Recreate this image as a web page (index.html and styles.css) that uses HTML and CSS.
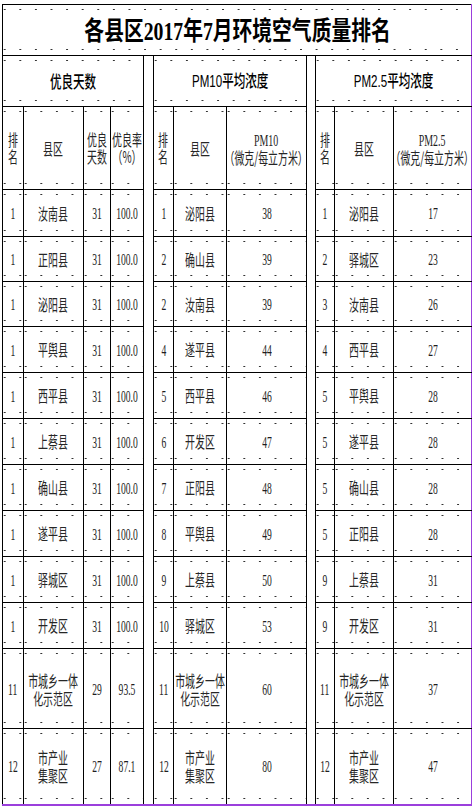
FILE: index.html
```html
<!DOCTYPE html>
<html lang="zh-CN">
<head>
<meta charset="utf-8">
<title>各县区2017年7月环境空气质量排名</title>
<link rel="stylesheet" href="styles.css">
</head>
<body>
<div class="sheet">
<table class="grid">
<colgroup>
<col class="c21"><col class="c60"><col class="c27"><col class="c33">
<col class="c10">
<col class="c20"><col class="c53"><col class="c80">
<col class="c9">
<col class="c19"><col class="c59"><col class="c78">
</colgroup>
<tr class="h51">
<td colspan="12" class="title dt"><span class="sq tt">各县区<span class="tn">2017</span>年<span class="tn">7</span>月环境空气质量排名</span></td>
</tr>
<tr class="h51">
<td colspan="4" class="grp dt"><span class="sq gs">优良天数</span></td>
<td rowspan="14" class="gap"></td>
<td colspan="3" class="grp dt"><span class="sq gs"><span class="lat">PM10</span>平均浓度</span></td>
<td rowspan="14" class="gap"></td>
<td colspan="3" class="grp dt"><span class="sq gs"><span class="lat">PM2.5</span>平均浓度</span></td>
</tr>
<tr class="h83 dt">
<td><span class="sq">排<br>名</span></td>
<td><span class="sq">县区</span></td>
<td><span class="sq">优良<br>天数</span></td>
<td><span class="sq">优良率<br>（%）</span></td>
<td><span class="sq">排<br>名</span></td>
<td><span class="sq">县区</span></td>
<td><span class="sq"><span class="num">PM10</span><br>（微克/每立方米）</span></td>
<td><span class="sq">排<br>名</span></td>
<td><span class="sq">县区</span></td>
<td><span class="sq"><span class="num">PM2.5</span><br>（微克/每立方米）</span></td>
</tr>
<tr class="h47 dt">
<td><span class="sq num">1</span></td><td><span class="sq">汝南县</span></td><td><span class="sq num">31</span></td><td><span class="sq num">100.0</span></td>
<td><span class="sq num">1</span></td><td><span class="sq">泌阳县</span></td><td><span class="sq num">38</span></td>
<td><span class="sq num">1</span></td><td><span class="sq">泌阳县</span></td><td><span class="sq num">17</span></td>
</tr>
<tr class="h45 dt">
<td><span class="sq num">1</span></td><td><span class="sq">正阳县</span></td><td><span class="sq num">31</span></td><td><span class="sq num">100.0</span></td>
<td><span class="sq num">2</span></td><td><span class="sq">确山县</span></td><td><span class="sq num">39</span></td>
<td><span class="sq num">2</span></td><td><span class="sq">驿城区</span></td><td><span class="sq num">23</span></td>
</tr>
<tr class="h45 dt">
<td><span class="sq num">1</span></td><td><span class="sq">泌阳县</span></td><td><span class="sq num">31</span></td><td><span class="sq num">100.0</span></td>
<td><span class="sq num">2</span></td><td><span class="sq">汝南县</span></td><td><span class="sq num">39</span></td>
<td><span class="sq num">3</span></td><td><span class="sq">汝南县</span></td><td><span class="sq num">26</span></td>
</tr>
<tr class="h46 dt">
<td><span class="sq num">1</span></td><td><span class="sq">平舆县</span></td><td><span class="sq num">31</span></td><td><span class="sq num">100.0</span></td>
<td><span class="sq num">4</span></td><td><span class="sq">遂平县</span></td><td><span class="sq num">44</span></td>
<td><span class="sq num">4</span></td><td><span class="sq">西平县</span></td><td><span class="sq num">27</span></td>
</tr>
<tr class="h46 dt">
<td><span class="sq num">1</span></td><td><span class="sq">西平县</span></td><td><span class="sq num">31</span></td><td><span class="sq num">100.0</span></td>
<td><span class="sq num">5</span></td><td><span class="sq">西平县</span></td><td><span class="sq num">46</span></td>
<td><span class="sq num">5</span></td><td><span class="sq">平舆县</span></td><td><span class="sq num">28</span></td>
</tr>
<tr class="h46 dt">
<td><span class="sq num">1</span></td><td><span class="sq">上蔡县</span></td><td><span class="sq num">31</span></td><td><span class="sq num">100.0</span></td>
<td><span class="sq num">6</span></td><td><span class="sq">开发区</span></td><td><span class="sq num">47</span></td>
<td><span class="sq num">5</span></td><td><span class="sq">遂平县</span></td><td><span class="sq num">28</span></td>
</tr>
<tr class="h46 dt">
<td><span class="sq num">1</span></td><td><span class="sq">确山县</span></td><td><span class="sq num">31</span></td><td><span class="sq num">100.0</span></td>
<td><span class="sq num">7</span></td><td><span class="sq">正阳县</span></td><td><span class="sq num">48</span></td>
<td><span class="sq num">5</span></td><td><span class="sq">确山县</span></td><td><span class="sq num">28</span></td>
</tr>
<tr class="h46 dt">
<td><span class="sq num">1</span></td><td><span class="sq">遂平县</span></td><td><span class="sq num">31</span></td><td><span class="sq num">100.0</span></td>
<td><span class="sq num">8</span></td><td><span class="sq">平舆县</span></td><td><span class="sq num">49</span></td>
<td><span class="sq num">5</span></td><td><span class="sq">正阳县</span></td><td><span class="sq num">28</span></td>
</tr>
<tr class="h46 dt">
<td><span class="sq num">1</span></td><td><span class="sq">驿城区</span></td><td><span class="sq num">31</span></td><td><span class="sq num">100.0</span></td>
<td><span class="sq num">9</span></td><td><span class="sq">上蔡县</span></td><td><span class="sq num">50</span></td>
<td><span class="sq num">9</span></td><td><span class="sq">上蔡县</span></td><td><span class="sq num">31</span></td>
</tr>
<tr class="h46 dt">
<td><span class="sq num">1</span></td><td><span class="sq">开发区</span></td><td><span class="sq num">31</span></td><td><span class="sq num">100.0</span></td>
<td><span class="sq num">10</span></td><td><span class="sq">驿城区</span></td><td><span class="sq num">53</span></td>
<td><span class="sq num">9</span></td><td><span class="sq">开发区</span></td><td><span class="sq num">31</span></td>
</tr>
<tr class="h80 dt">
<td><span class="sq num">11</span></td><td><span class="sq two">市城乡一体<br>化示范区</span></td><td><span class="sq num">29</span></td><td><span class="sq num">93.5</span></td>
<td><span class="sq num">11</span></td><td><span class="sq two">市城乡一体<br>化示范区</span></td><td><span class="sq num">60</span></td>
<td><span class="sq num">11</span></td><td><span class="sq two">市城乡一体<br>化示范区</span></td><td><span class="sq num">37</span></td>
</tr>
<tr class="h76 dt last">
<td><span class="sq num">12</span></td><td><span class="sq two">市产业<br>集聚区</span></td><td><span class="sq num">27</span></td><td><span class="sq num">87.1</span></td>
<td><span class="sq num">12</span></td><td><span class="sq two">市产业<br>集聚区</span></td><td><span class="sq num">80</span></td>
<td><span class="sq num">12</span></td><td><span class="sq two">市产业<br>集聚区</span></td><td><span class="sq num">47</span></td>
</tr>
</table>
</div>
</body>
</html>
```
FILE: styles.css
```css
html, body {
  margin: 0;
  padding: 0;
  background: #ffffff;
}

.sheet {
  padding: 4px 0 0 2px;
}

.grid {
  border-collapse: collapse;
  table-layout: fixed;
  width: 470px;
  font-family: "Noto Sans CJK SC", "Noto Sans", sans-serif;
  color: #262626;
  border-top: 1px solid #000;
  border-left: 1px solid #000;
  border-right: 1px solid #9b3fdc;
  border-bottom: 2px solid #9b3fdc;
}

.c21 { width: 21px; }
.c60 { width: 60px; }
.c27 { width: 27px; }
.c33 { width: 33px; }
.c10 { width: 10px; }
.c20 { width: 20px; }
.c53 { width: 53px; }
.c80 { width: 80px; }
.c9  { width: 9px; }
.c19 { width: 19px; }
.c59 { width: 59px; }
.c78 { width: 78px; }

.h51 { height: 51px; }
.h83 { height: 83px; }
.h47 { height: 47px; }
.h45 { height: 45px; }
.h46 { height: 46px; }
.h80 { height: 80px; }
.h76 { height: 76px; }

.grid td {
  border: 1px solid #000;
  padding: 0;
  text-align: center;
  vertical-align: middle;
  font-size: 16px;
  line-height: 17px;
  overflow: visible;
}

.grid tr td:last-child {
  border-right-color: #9b3fdc;
}

.grid .last td {
  border-bottom: 2px solid #9b3fdc;
}

.grid td.gap {
  border-top: none;
  border-bottom: 2px solid #9b3fdc;
  background: #fff;
}

.dt td,
td.dt {
  background-image:
    radial-gradient(circle, #333 0 0.6px, transparent 1.1px),
    radial-gradient(circle, #333 0 0.6px, transparent 1.1px);
  background-size: 15.6px 3px, 15.6px 3px;
  background-repeat: repeat-x, repeat-x;
  background-position: 9px 3px, 9px calc(100% - 4px);
}

.sq {
  display: inline-block;
  white-space: nowrap;
  transform: scaleX(0.62);
  margin: 0 -80px;
}

.sq.two {
  line-height: 18px;
}

.num {
  font-family: "Liberation Serif", "DejaVu Serif", serif;
  font-size: 16px;
  color: #1e1e1e;
}

.sq.num {
  transform: scaleX(0.6);
}

.tt {
  font-size: 26px;
  line-height: 30px;
  font-weight: 700;
  color: #000;
  transform: scaleX(0.76);
}

.tn {
  font-family: "Liberation Serif", serif;
  font-weight: 700;
}

.gs {
  font-size: 17px;
  line-height: 20px;
  font-weight: 500;
  color: #000;
  transform: scaleX(0.68);
}

.lat {
  font-family: "Liberation Sans", Arial, sans-serif;
}
```
